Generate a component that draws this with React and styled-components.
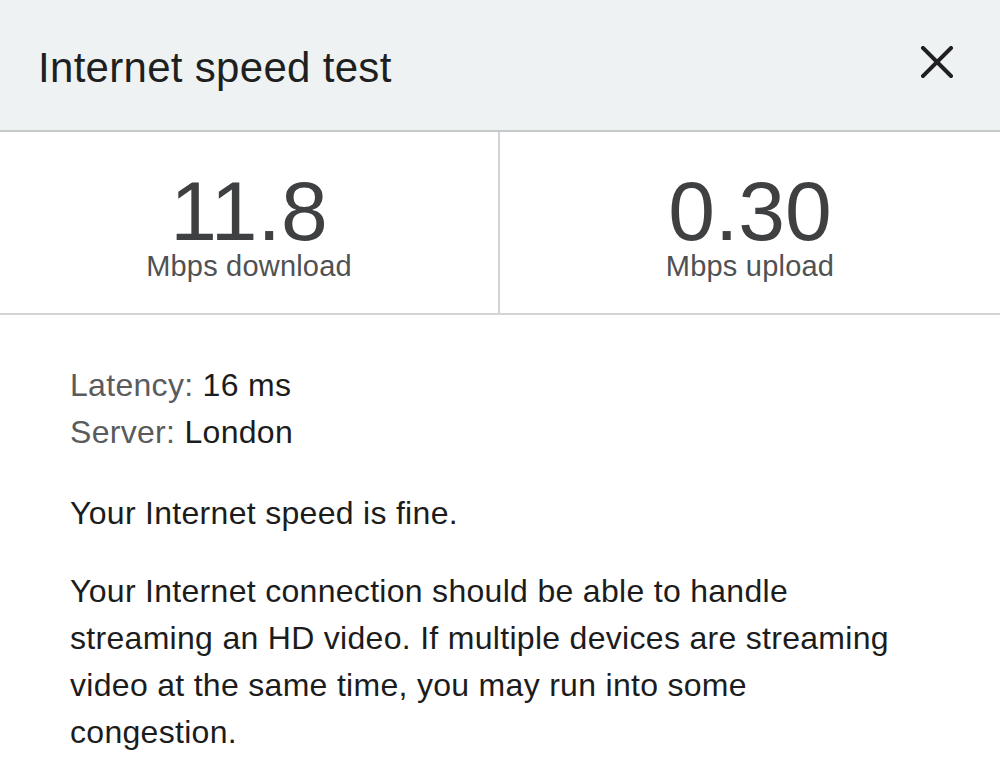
import React from 'react';
import styled, { createGlobalStyle } from 'styled-components';

const GlobalStyle = createGlobalStyle`
  html, body {
    margin: 0;
    padding: 0;
    background: #ffffff;
  }
  body {
    font-family: 'Liberation Sans', Arial, Helvetica, sans-serif;
    -webkit-font-smoothing: antialiased;
  }
`;

const Wrapper = styled.div`
  width: 1000px;
  height: 768px;
  overflow: hidden;
  background: #ffffff;
`;

const Header = styled.div`
  display: flex;
  align-items: center;
  justify-content: space-between;
  height: 130px;
  padding: 0 47px 0 38px;
  background: #eff2f3;
  border-bottom: 2px solid #c6c8c9;
  box-sizing: content-box;
`;

const Title = styled.h1`
  margin: 6px 0 0 0;
  font-size: 42px;
  line-height: 1;
  font-weight: 400;
  letter-spacing: 0.3px;
  color: #1e1f20;
`;

const CloseButton = styled.button`
  display: flex;
  padding: 0;
  margin: 0 0 6px 0;
  border: none;
  background: transparent;
  cursor: pointer;
`;

const Stats = styled.div`
  display: grid;
  grid-template-columns: 1fr 1fr;
  border-bottom: 2px solid #d3d4d5;
`;

const StatCell = styled.div`
  display: flex;
  flex-direction: column;
  align-items: center;
  height: 181px;
  padding-top: 38px;
  box-sizing: border-box;
  border-right: ${props => (props.divider ? '2px solid #d3d4d5' : 'none')};
`;

const StatValue = styled.div`
  font-size: 84px;
  line-height: 82px;
  color: #3f4041;
`;

const StatLabel = styled.div`
  font-size: 29px;
  line-height: 29px;
  letter-spacing: 0.2px;
  color: #505152;
`;

const Body = styled.div`
  padding: 47px 105px 0 70px;
  font-size: 32px;
  line-height: 47px;
  letter-spacing: 0.3px;
  color: #1c1c1d;
`;

const InfoLine = styled.div`
  white-space: nowrap;
`;

const InfoKey = styled.span`
  color: #5a5b5c;
`;

const Paragraph = styled.p`
  margin: ${props => (props.first ? '34px' : '31px')} 0 0 0;
`;

function CloseIcon() {
  return (
    <svg width="32" height="32" viewBox="0 0 32 32">
      <path
        d="M2 2 L30 30 M30 2 L2 30"
        stroke="#1f2021"
        strokeWidth="4"
        strokeLinecap="square"
        fill="none"
      />
    </svg>
  );
}

export default function App() {
  return (
    <Wrapper>
      <GlobalStyle />
      <Header>
        <Title>Internet speed test</Title>
        <CloseButton aria-label="Close">
          <CloseIcon />
        </CloseButton>
      </Header>
      <Stats>
        <StatCell divider>
          <StatValue>11.8</StatValue>
          <StatLabel>Mbps download</StatLabel>
        </StatCell>
        <StatCell>
          <StatValue>0.30</StatValue>
          <StatLabel>Mbps upload</StatLabel>
        </StatCell>
      </Stats>
      <Body>
        <InfoLine>
          <InfoKey>Latency:</InfoKey> 16 ms
        </InfoLine>
        <InfoLine>
          <InfoKey>Server:</InfoKey> London
        </InfoLine>
        <Paragraph first>Your Internet speed is fine.</Paragraph>
        <Paragraph>
          Your Internet connection should be able to handle streaming an HD
          video. If multiple devices are streaming video at the same time, you
          may run into some congestion.
        </Paragraph>
      </Body>
    </Wrapper>
  );
}
